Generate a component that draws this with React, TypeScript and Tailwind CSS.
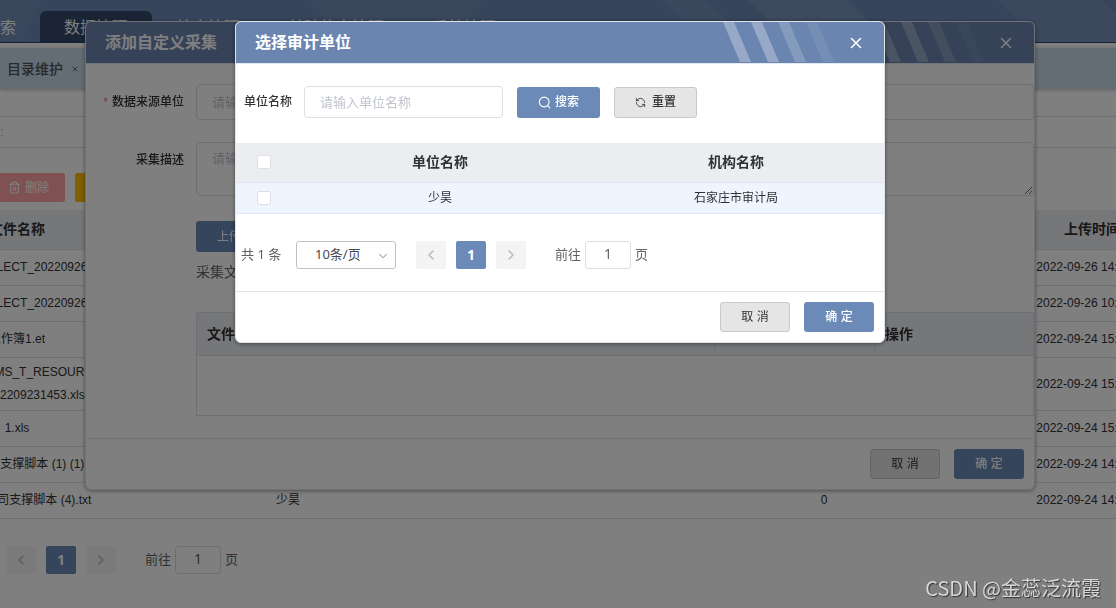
import React, { useState } from 'react';
import { ChevronDown, ChevronLeft, ChevronRight, RefreshCcw, Trash2, X } from 'lucide-react';

interface FileRow {
  name: string[];
  user: string;
  count: number;
  time: string;
}

const NAV_ITEMS = ['数据管理', '综合管理', '基础信息管理', '系统管理'];

const FILES: FileRow[] = [
  { name: ['AUD_COLLECT_202209261'], user: '少昊', count: 0, time: '2022-09-26 14:25:30' },
  { name: ['AUD_COLLECT_202209261'], user: '少昊', count: 0, time: '2022-09-26 10:12:08' },
  { name: ['工作簿1.et'], user: '少昊', count: 0, time: '2022-09-24 15:40:21' },
  { name: ['DATA_DBAMS_T_RESOURCE', 'CE_T_202209231453.xls'], user: '少昊', count: 0, time: '2022-09-24 15:32:17' },
  { name: ['1.xls'], user: '少昊', count: 0, time: '2022-09-24 15:20:44' },
  { name: ['2审计系公司支撑脚本 (1) (1).txt'], user: '少昊', count: 0, time: '2022-09-24 14:58:02' },
  { name: ['2审计系公司支撑脚本 (4).txt'], user: '少昊', count: 0, time: '2022-09-24 14:51:36' },
];

const UNITS = [{ id: 1, name: '少昊', org: '石家庄市审计局' }];

const SearchIcon = () => (
  <svg className="w-[13px] h-[13px]" viewBox="0 0 13 13" fill="none" stroke="currentColor" strokeWidth="1.1">
    <circle cx="6.2" cy="6" r="4.9" />
    <path d="M9.6 9.6l2.2 2.2" strokeLinecap="round" />
  </svg>
);

// Pagination bar, total and page size are optional
const Pager: React.FC<{ total?: number }> = ({ total }) => {
  const [page, setPage] = useState('1');

  return (
    <div className="flex items-center h-7 text-[13px] text-[#606266] font-['Noto_Sans','Noto_Sans_CJK_SC',sans-serif]">
      {total !== undefined && (
        <>
          <span className="whitespace-nowrap w-[55px]">共 {total} 条</span>
          <div className="relative mr-5">
            <select
              aria-label="每页条数"
              className="appearance-none block w-[100px] h-7 pl-[18px] border border-[#bfc1c5] rounded-[3px] bg-white text-[#484a4e]"
            >
              <option>10条/页</option>
              <option>20条/页</option>
            </select>
            <ChevronDown className="absolute right-1.5 top-2 w-3.5 h-3.5 text-[#6f7175] pointer-events-none" strokeWidth={1.5} />
          </div>
        </>
      )}
      <div className="flex gap-2.5">
        <button aria-label="上一页" className="w-[30px] h-7 rounded-xs bg-[#f4f4f5] text-[#b9bcc4] flex items-center justify-center">
          <ChevronLeft className="w-4 h-4" strokeWidth={2.5} />
        </button>
        <button className="w-[30px] h-7 rounded-xs bg-[#6b8ab7] text-sm text-white font-bold">1</button>
        <button aria-label="下一页" className="w-[30px] h-7 rounded-xs bg-[#f4f4f5] text-[#b9bcc4] flex items-center justify-center">
          <ChevronRight className="w-4 h-4" strokeWidth={2.5} />
        </button>
      </div>
      <label className="flex items-center gap-1 ml-[29px]">
        前往
        <input
          value={page}
          onChange={(e) => setPage(e.target.value)}
          className="w-[46px] h-7 pb-0.5 border border-[#dcdfe6] rounded-[3px] bg-white text-sm text-center"
        />
        页
      </label>
    </div>
  );
};

interface DialogProps {
  title: string;
  width: string;
  children: React.ReactNode;
}

const Dialog: React.FC<DialogProps> = ({ title, width, children }) => (
  <div className="fixed inset-x-0 top-0 flex justify-center pl-1 pt-[21px]">
    <section
      role="dialog"
      aria-label={title}
      className={`${width} max-w-full bg-white border border-[#dfe3ea] rounded-md overflow-hidden shadow-[0_1px_4px_rgba(0,0,0,0.4)]`}
    >
      <header className="relative h-[42px] bg-[#6a85af] flex items-center justify-between pl-[19px] pr-[19px] text-white border-b border-[#e3eaf4]">
        <h2 className="text-base font-bold">{title}</h2>
        <svg className="absolute right-[50px] top-0 w-[111px] h-10" viewBox="0 0 111 40" fill="#fff">
          <path d="M0 0h11l17 40H17z" opacity=".3" />
          <path d="M28 0h11l17 40H45z" opacity=".3" />
          <path d="M55 0h11l17 40H72z" opacity=".18" />
          <path d="M83 0h11l17 40h-11z" opacity=".08" />
        </svg>
        <button aria-label="关闭">
          <X className="w-[18px] h-[18px]" strokeWidth={2} />
        </button>
      </header>
      {children}
      <footer className="flex justify-end gap-[14px] border-t border-[#e2e5ee] px-2.5 py-2.5">
        <button className="w-[70px] h-[30px] border border-[#c9c9c9] rounded-[3px] bg-[#e5e5e5] text-xs text-[#333]">取 消</button>
        <button className="w-[70px] h-[30px] rounded-[3px] bg-[#6b8ab7] text-xs font-medium text-white">确 定</button>
      </footer>
    </section>
  </div>
);

// Main page behind the dialogs
const FileListPage: React.FC = () => (
  <div className="min-h-screen bg-white overflow-hidden">
    <header className="relative h-[43px] bg-[#6e8bb8] border-b border-[#2b4470] overflow-hidden">
      <svg className="absolute inset-0 w-full h-full" viewBox="0 0 1116 42" preserveAspectRatio="none" fill="#fff">
        <path d="M0 0h42l-20 42H0zM306 0l42 42h100L490 0z" opacity=".03" />
        <path d="M662 0h44l42 42h-44z" opacity=".05" />
        <path d="M748 0h99l42 42h-99z" opacity=".08" />
        <path d="M997 0h104l15 15v27h-77z" opacity=".06" />
      </svg>
      <nav className="relative flex h-full items-end">
        <a href="#" className="w-10 h-[31px] flex items-center justify-end pt-0.5 pr-6 text-base text-white">索</a>
        {NAV_ITEMS.map((item, i) => (
          <a
            key={item}
            href="#"
            className={`h-[31px] px-6 pt-0.5 flex items-center text-base text-white whitespace-nowrap ${
              i === 0 ? 'bg-[#34486a] rounded-t-md' : ''
            }`}
          >
            {item}
          </a>
        ))}
      </nav>
    </header>

    <div className="mt-[5px] h-[41px] bg-[#c9dae8] shadow-[0_1px_4px_rgba(0,0,0,0.25)] flex items-center pl-[7px] text-sm text-[#505256]">
      <span className="font-medium">目录维护</span>
      <button aria-label="关闭标签" className="ml-2 text-[#555]">
        <X className="w-2 h-2" strokeWidth={2.5} />
      </button>
    </div>
    <div className="h-7 border-b border-[#dcdfe6]" />
    <div className="h-[31px] border-b border-[#dcdfe6] flex items-center text-xs text-[#7da7e8]">:</div>

    <div className="flex gap-2.5 mt-[25px] -ml-4">
      <button className="w-[81px] h-[29px] rounded-xs bg-[#ffa3a5] text-white text-xs flex items-center justify-end gap-1 pr-4">
        <Trash2 className="w-[13px] h-[13px]" strokeWidth={2} />
        删除
      </button>
      <button aria-label="导出" className="w-20 h-[29px] rounded-xs bg-[#ffbf00]" />
    </div>

    <table className="mt-2 -ml-[83px] w-[1236px] table-fixed text-xs text-[#303133] text-center">
      <thead>
        <tr className="h-[39px] bg-[#ebeef3] border-b border-[#dcdfe6] text-sm">
          <th className="w-[200px]">文件名称</th>
          <th className="w-[342px]">上传人</th>
          <th className="w-[259px]" />
          <th className="w-[212px]">次数</th>
          <th className="w-[101px]" />
          <th>上传时间</th>
        </tr>
      </thead>
      <tbody>
        {FILES.map((f, i) => (
          <tr key={i} className="h-9 border-b border-[#dcdfe6]">
            <td className="whitespace-nowrap leading-[23px] py-[3px]">
              {f.name.map((line) => (
                <div key={line}>{line}</div>
              ))}
            </td>
            <td>{f.user}</td>
            <td />
            <td>{f.count}</td>
            <td />
            <td className="whitespace-nowrap">{f.time}</td>
          </tr>
        ))}
      </tbody>
    </table>

    <div className="mt-[27px] pl-1.5">
      <Pager />
    </div>
  </div>
);

const CollectDialog: React.FC = () => (
  <Dialog title="添加自定义采集" width="w-[950px]">
    <div className="text-xs text-[#303133]">
      <div className="flex items-center pt-5">
        <label htmlFor="source" className="w-[98px] mr-3 text-right font-medium whitespace-nowrap">
          <span className="text-[#f56c6c] mr-1">*</span>数据来源单位
        </label>
        <input
          id="source"
          placeholder="请输入数据来源单位"
          className="flex-1 h-9 px-[15px] border border-[#dcdfe6] rounded text-[13px] placeholder:text-[#c0c4cc]"
        />
      </div>
      <div className="flex mt-[22px]">
        <label htmlFor="desc" className="w-[98px] mr-3 leading-9 text-right font-medium">采集描述</label>
        <textarea
          id="desc"
          placeholder="请输入采集描述"
          className="block flex-1 h-[54px] px-[15px] py-[7px] border border-[#dcdfe6] rounded text-[13px] placeholder:text-[#c0c4cc]"
        />
      </div>
      <div className="ml-[110px] mt-[25px]">
        <button className="h-[31px] px-[21px] rounded-[3px] bg-[#6b8ab7] text-white">上传文件</button>
        <p className="mt-[10px] text-sm text-[#606266]">采集文件</p>
        <table className="w-full mt-[30px] mb-[22px] table-fixed border border-[#dcdfe6] text-sm">
          <thead>
            <tr className="h-[43px] bg-[#ebeef3] border-b border-[#dcdfe6] text-left">
              <th className="px-2.5">文件名称</th>
              <th className="w-[160px] border-r border-[#dcdfe6]" />
              <th className="w-[160px] border-r border-[#dcdfe6]" />
              <th className="w-[159px] px-2.5">操作</th>
            </tr>
          </thead>
          <tbody>
            <tr className="h-[60px]">
              <td colSpan={4} />
            </tr>
          </tbody>
        </table>
      </div>
    </div>
  </Dialog>
);

const UnitDialog: React.FC = () => {
  const [keyword, setKeyword] = useState('');

  return (
    <Dialog title="选择审计单位" width="w-[650px]">
      <div className="flex items-center pl-2 pt-[22px] text-xs text-[#303133]">
        <label htmlFor="unit" className="w-12 mr-3 font-medium whitespace-nowrap">单位名称</label>
        <input
          id="unit"
          value={keyword}
          onChange={(e) => setKeyword(e.target.value)}
          placeholder="请输入单位名称"
          className="w-[199px] h-8 px-[15px] border border-[#dcdfe6] rounded text-[13px] placeholder:text-[#c0c4cc]"
        />
        <button className="ml-[14px] w-[83px] h-[31px] rounded-[3px] bg-[#6b8ab7] text-white font-medium flex items-center justify-center gap-1">
          <SearchIcon />
          搜索
        </button>
        <button
          onClick={() => setKeyword('')}
          className="ml-[14px] w-[83px] h-[31px] border border-[#c9c9c9] rounded-[3px] bg-[#e5e5e5] text-[#333] font-medium flex items-center justify-center gap-1.5"
        >
          <RefreshCcw className="w-[11px] h-[11px]" strokeWidth={1.8} />
          重置
        </button>
      </div>

      <table className="w-full mt-[25px] table-fixed text-xs text-center text-[#303133]">
        <thead>
          <tr className="h-[39px] bg-[#ebedf1] border-b border-[#dfe4ee] text-sm">
            <th className="w-14">
              <input type="checkbox" aria-label="全选" className="appearance-none block mx-auto w-[14px] h-[14px] border border-[#dcdfe6] rounded-xs bg-white" />
            </th>
            <th>单位名称</th>
            <th>机构名称</th>
          </tr>
        </thead>
        <tbody>
          {UNITS.map((u) => (
            <tr key={u.id} className="h-[31px] bg-[#eef5ff] border-b border-[#e2e8f2]">
              <td>
                <input type="checkbox" aria-label={u.name} className="appearance-none block mx-auto w-[14px] h-[14px] border border-[#dcdfe6] rounded-xs bg-white" />
              </td>
              <td>{u.name}</td>
              <td>{u.org}</td>
            </tr>
          ))}
        </tbody>
      </table>

      <div className="pl-[5px] pt-[27px] pb-[22px]">
        <Pager total={UNITS.length} />
      </div>
    </Dialog>
  );
};

export default function App() {
  return (
    <div className="font-['Liberation_Sans','Noto_Sans_CJK_SC',sans-serif]">
      <FileListPage />
      <CollectDialog />
      <div className="fixed inset-0 bg-black/50" />
      <UnitDialog />
      <div className="fixed right-[15px] bottom-1.5 font-['Noto_Sans_CJK_SC',sans-serif] text-xl leading-7 text-[#d6d6d6] [text-shadow:1px_1px_1px_rgba(0,0,0,0.6)] whitespace-nowrap">
        CSDN @金蕊泛流霞
      </div>
    </div>
  );
}
